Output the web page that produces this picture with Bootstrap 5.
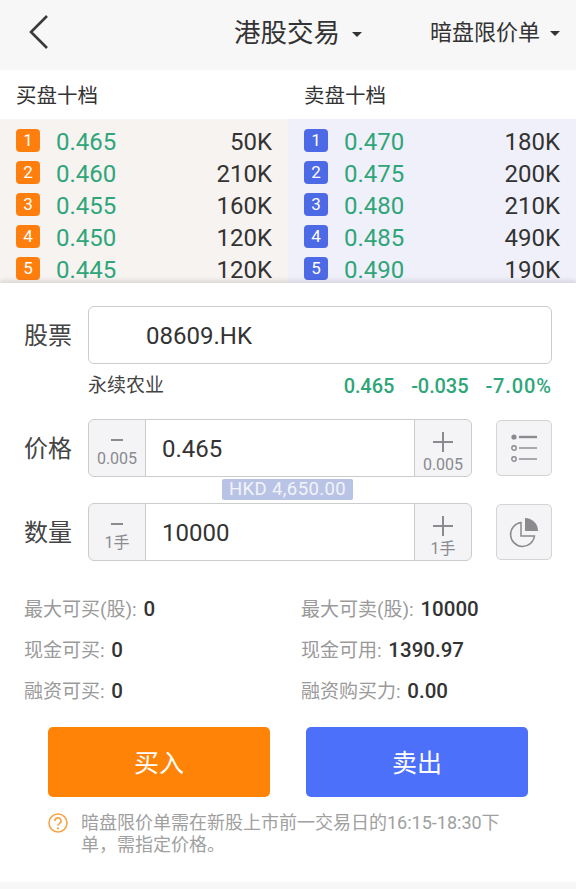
<!DOCTYPE html>
<html lang="zh-CN">
<head>
<meta charset="utf-8">
<title>港股交易</title>
<link href="https://cdn.jsdelivr.net/npm/bootstrap@5.3.0/dist/css/bootstrap.min.css" rel="stylesheet">
<style>
html,body{height:889px;overflow:hidden}
body{font-family:Roboto,"Noto Sans CJK SC",sans-serif;color:#333;background:#fff}
.top-bar{height:70px;background:#f7f7f7;padding:0 16px 0 28px}
.back-ic{width:22px;height:36px;display:block;margin-bottom:6px}
.title-tx{font-size:26.5px;color:#333;margin-left:184px;padding:0;border:0;background:none;line-height:1;margin-bottom:4px}
.mode-tx{font-size:22px;color:#333;margin-left:auto;padding:0;border:0;background:none;line-height:1;margin-bottom:4px}
.title-tx::after,.mode-tx::after{margin-left:12px;vertical-align:.18em;border-top-width:5px;border-left-width:5px;border-right-width:5px}
.mode-tx::after{margin-left:10px}
.book-head{height:49px;font-size:20.5px;line-height:1;padding-top:3px}
.book-head>div{width:288px;padding-left:16px}
.book-body{height:164px;overflow:hidden}
.book-side{width:288px;padding:7px 16px 0}
.side-b{background:#f6f3f0}
.side-s{background:#f0f0fa}
.q-row{height:32px;font-size:24px;line-height:33px}
.q-idx{width:24px;height:23px;border-radius:4px;color:#fff;font-size:17px;line-height:23px;text-align:center;margin-right:16px;margin-top:3px;flex:none}
.side-b .q-idx{background:#ff7f0e}
.side-s .q-idx{background:#4d6ae6}
.q-price{color:#2fa57a}
.q-size{margin-left:auto;color:#333}
.panel{position:relative;padding:23px 24px 0;box-shadow:0 -3px 4px rgba(0,0,0,.1);background:#fff}
.f-lab{width:64px;font-size:24px;color:#444;flex:none;line-height:1;padding-top:2px}
.stock-in{height:58px;border:1px solid #ccc;border-radius:6px;font-size:24px;color:#333;padding:2px 0 0 57px}
.info-ln{height:55px;padding:10px 0 0 64px;font-size:19px;line-height:24px;color:#444}
.q-vals{margin-left:auto;font-size:20px;font-weight:500;color:#2fa57a;letter-spacing:-.1px}
.q-vals span+span{margin-left:17px}
.q-vals span:last-child{letter-spacing:.9px}
.step-g{width:384px;height:58px;flex:none}
.step-g .form-control{height:58px;font-size:24px;color:#333;border-color:#ccc;padding:2px 16px 0;border-radius:0;box-shadow:none}
.step-b{width:58px;height:58px;background:#f4f4f7;border:1px solid #ccc;border-radius:6px;padding:0;display:flex;flex-direction:column;align-items:center;color:#8a8a8f;font-size:16px;line-height:1;position:relative;z-index:1;flex:none}
.step-b svg{display:block;margin-top:18px;margin-bottom:9px}
.step-b .plus-ic{margin-top:12px;margin-bottom:5px}
.side-btn{width:56px;height:56px;margin-left:24px;background:#f4f4f7;border:1px solid #d4d4d4;border-radius:5px;padding:0;display:flex;align-items:center;justify-content:center;flex:none}
.hkd-gap{height:26px;display:flex;justify-content:center}
.hkd-tag{height:21px;margin-top:2px;padding:0 7px;background:#b9c3e6;color:#f2f4fb;font-size:18.5px;line-height:21px;border-radius:2px;letter-spacing:.4px;margin-right:1px}
.stats{margin-top:28px;font-size:19px;line-height:41px;color:#9a9a9a;display:grid;grid-template-columns:277px 1fr;grid-auto-rows:41px}
.stats b{font-size:20.5px;font-weight:500;color:#333;margin-left:2px}
.act-row{margin-top:15px;padding:0 48px;gap:36px}
.act-b{width:222px;height:70px;border:0;border-radius:5px;color:#fff;font-size:25px;padding:3px 0 0}
.act-buy{background:#ff8306}
.act-buy:hover,.act-sell:hover{color:#fff}
.act-sell{background:#4d70fb}
.note{margin-top:15px;padding:0 48px;font-size:18px;line-height:22px;color:#a0a0a0}
.note svg{flex:none;margin:1px 13px 0 0}
.note p{width:430px;margin:0}
.bot-band{position:absolute;left:0;right:0;top:882px;height:7px;background:#f7f7f7}
</style>
</head>
<body>
<header class="top-bar d-flex align-items-center">
  <svg class="back-ic" viewBox="0 0 22 36" fill="none" stroke="#3a3a3a" stroke-width="2.6" aria-label="返回"><path d="M19 2 3 18l16 16"/></svg>
  <button class="title-tx dropdown-toggle" type="button">港股交易</button>
  <button class="mode-tx dropdown-toggle" type="button">暗盘限价单</button>
</header>

<section>
  <div class="book-head d-flex align-items-center">
    <div>买盘十档</div>
    <div>卖盘十档</div>
  </div>
  <div class="book-body d-flex">
    <div class="book-side side-b">
      <div class="q-row d-flex"><span class="q-idx">1</span><span class="q-price">0.465</span><span class="q-size">50K</span></div>
      <div class="q-row d-flex"><span class="q-idx">2</span><span class="q-price">0.460</span><span class="q-size">210K</span></div>
      <div class="q-row d-flex"><span class="q-idx">3</span><span class="q-price">0.455</span><span class="q-size">160K</span></div>
      <div class="q-row d-flex"><span class="q-idx">4</span><span class="q-price">0.450</span><span class="q-size">120K</span></div>
      <div class="q-row d-flex"><span class="q-idx">5</span><span class="q-price">0.445</span><span class="q-size">120K</span></div>
    </div>
    <div class="book-side side-s">
      <div class="q-row d-flex"><span class="q-idx">1</span><span class="q-price">0.470</span><span class="q-size">180K</span></div>
      <div class="q-row d-flex"><span class="q-idx">2</span><span class="q-price">0.475</span><span class="q-size">200K</span></div>
      <div class="q-row d-flex"><span class="q-idx">3</span><span class="q-price">0.480</span><span class="q-size">210K</span></div>
      <div class="q-row d-flex"><span class="q-idx">4</span><span class="q-price">0.485</span><span class="q-size">490K</span></div>
      <div class="q-row d-flex"><span class="q-idx">5</span><span class="q-price">0.490</span><span class="q-size">190K</span></div>
    </div>
  </div>
</section>

<section class="panel">
  <div class="d-flex align-items-center">
    <label class="f-lab">股票</label>
    <input class="form-control stock-in" value="08609.HK">
  </div>
  <div class="info-ln d-flex">
    <span>永续农业</span>
    <span class="q-vals"><span>0.465</span><span>-0.035</span><span>-7.00%</span></span>
  </div>
  <div class="d-flex align-items-center">
    <label class="f-lab">价格</label>
    <div class="input-group step-g flex-nowrap">
      <button class="step-b" type="button"><svg width="14" height="4" viewBox="0 0 14 4"><path d="M1 2h12" stroke="#8a8a8f" stroke-width="2"/></svg>0.005</button>
      <input class="form-control" value="0.465">
      <button class="step-b" type="button"><svg class="plus-ic" width="20" height="20" viewBox="0 0 20 20"><path d="M0 10h20M10 0v20" stroke="#8a8a8f" stroke-width="2"/></svg>0.005</button>
    </div>
    <button class="side-btn" type="button" aria-label="列表">
      <svg width="26" height="30" viewBox="0 0 26 30" fill="none" stroke="#8a8a8f"><circle cx="3" cy="4" r="2.6" fill="#8a8a8f" stroke="none"/><path d="M8 4h18" stroke-width="2.4"/><circle cx="3" cy="15" r="2.2" stroke-width="1.4"/><path d="M8 15h18" stroke-width="1.4"/><circle cx="3" cy="26" r="2.2" stroke-width="1.4"/><path d="M8 26h18" stroke-width="1.4"/></svg>
    </button>
  </div>
  <div class="hkd-gap"><span class="hkd-tag">HKD 4,650.00</span></div>
  <div class="d-flex align-items-center">
    <label class="f-lab">数量</label>
    <div class="input-group step-g flex-nowrap">
      <button class="step-b" type="button"><svg width="14" height="4" viewBox="0 0 14 4"><path d="M1 2h12" stroke="#8a8a8f" stroke-width="2"/></svg>1手</button>
      <input class="form-control" value="10000">
      <button class="step-b" type="button"><svg class="plus-ic" width="20" height="20" viewBox="0 0 20 20"><path d="M0 10h20M10 0v20" stroke="#8a8a8f" stroke-width="2"/></svg>1手</button>
    </div>
    <button class="side-btn" type="button" aria-label="仓位">
      <svg width="32" height="32" viewBox="0 0 32 32" fill="none"><path d="M13 6.5A12 12 0 1 0 26.5 20H13z" stroke="#8a8a8f" stroke-width="1.5"/><path d="M17 2a13 13 0 0 1 13 13H17z" fill="#8a8a8f"/></svg>
    </button>
  </div>
  <div class="stats">
    <div>最大可买(股): <b>0</b></div><div>最大可卖(股): <b>10000</b></div>
    <div>现金可买: <b>0</b></div><div>现金可用: <b>1390.97</b></div>
    <div>融资可买: <b>0</b></div><div>融资购买力: <b>0.00</b></div>
  </div>
</section>

<div class="act-row d-flex">
  <button class="btn act-b act-buy" type="button">买入</button>
  <button class="btn act-b act-sell" type="button">卖出</button>
</div>
<div class="note d-flex">
  <svg width="20" height="20" viewBox="0 0 20 20" fill="none"><circle cx="10" cy="10" r="9" stroke="#f5a54a" stroke-width="1.6"/><path d="M7 8a3 3 0 1 1 4.6 2.4c-1 .7-1.6 1.2-1.6 2.4" stroke="#f5a54a" stroke-width="1.7"/><circle cx="10" cy="15.4" r="1.1" fill="#f5a54a"/></svg>
  <p>暗盘限价单需在新股上市前一交易日的16:15-18:30下单，需指定价格。</p>
</div>
<div class="bot-band"></div>
<script src="https://cdn.jsdelivr.net/npm/bootstrap@5.3.0/dist/js/bootstrap.bundle.min.js"></script>
</body>
</html>
